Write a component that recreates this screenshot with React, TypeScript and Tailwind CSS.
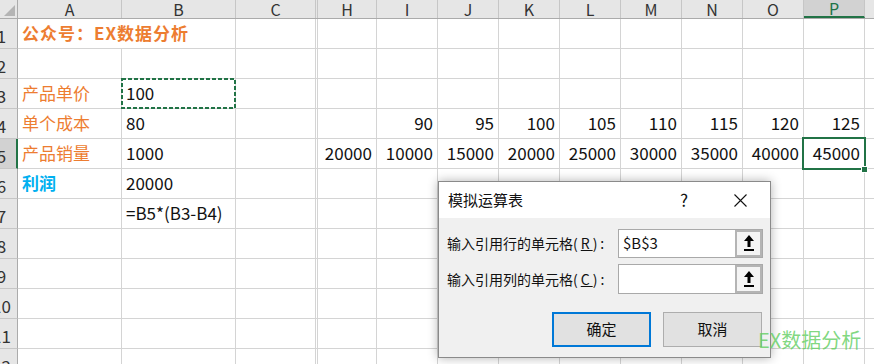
import React from 'react';

type Col = { key: string; label: string; w: string; selected?: boolean };

const cols: Col[] = [
  { key: 'A', label: 'A', w: 'w-[104px]' },
  { key: 'B', label: 'B', w: 'w-[114px]' },
  { key: 'C', label: 'C', w: 'w-[80px]' },
  { key: 'hidden', label: '', w: 'w-[2px]' },
  { key: 'H', label: 'H', w: 'w-[59px]' },
  { key: 'I', label: 'I', w: 'w-[61px]' },
  { key: 'J', label: 'J', w: 'w-[61px]' },
  { key: 'K', label: 'K', w: 'w-[61px]' },
  { key: 'L', label: 'L', w: 'w-[61px]' },
  { key: 'M', label: 'M', w: 'w-[61px]' },
  { key: 'N', label: 'N', w: 'w-[61px]' },
  { key: 'O', label: 'O', w: 'w-[61px]' },
  { key: 'P', label: 'P', w: 'w-[61px]', selected: true },
  { key: 'Q', label: 'Q', w: 'w-[61px]' },
];

type CellVal = { text: string; tone?: 'orange' | 'blueBold'; align?: 'right' };

const costs = ['90', '95', '100', '105', '110', '115', '120', '125'];
const sales = ['20000', '10000', '15000', '20000', '25000', '30000', '35000', '40000', '45000'];
const dataCols = ['I', 'J', 'K', 'L', 'M', 'N', 'O', 'P'];

const rows: Record<string, CellVal>[] = [
  {},
  {},
  { A: { text: '产品单价', tone: 'orange' }, B: { text: '100' } },
  {
    A: { text: '单个成本', tone: 'orange' },
    B: { text: '80' },
    ...Object.fromEntries(dataCols.map((c, i) => [c, { text: costs[i], align: 'right' as const }])),
  },
  {
    A: { text: '产品销量', tone: 'orange' },
    B: { text: '1000' },
    ...Object.fromEntries(['H', ...dataCols].map((c, i) => [c, { text: sales[i], align: 'right' as const }])),
  },
  { A: { text: '利润', tone: 'blueBold' }, B: { text: '20000' } },
  { B: { text: '=B5*(B3-B4)' } },
  {},
  {},
  {},
  {},
  {},
];

const toneClass = (tone?: CellVal['tone']) => {
  if (tone === 'orange') return 'text-[#ed7d31]';
  if (tone === 'blueBold') return 'text-[#00b0f0] font-bold';
  return 'text-[#111]';
};

function UpArrow() {
  return (
    <svg width="10" height="17" viewBox="0 0 10 17">
      <polygon points="5,0 10,6 6.5,6 6.5,12 3.5,12 3.5,6 0,6" fill="#000" />
      <rect x="0" y="14" width="10" height="2" fill="#000" />
    </svg>
  );
}

function RefInput({ value }: { value?: string }) {
  return (
    <div className="w-[145px] h-full flex border border-[#a9a9a9] bg-white">
      <div className="flex-1 flex items-center pl-[4px] text-[15px] text-[#111]">{value}</div>
      <div className="w-[27px] h-full bg-[#b4b4b4] p-[2px]">
        <div className="w-full h-full bg-[#f4f4f4] flex items-center justify-center">
          <UpArrow />
        </div>
      </div>
    </div>
  );
}

function DataTableDialog() {
  return (
    <div className="absolute left-[438px] top-[181px] w-[333px] h-[177px] border border-[#8a8a8a] bg-[#f0f0f0] shadow-[0_0_10px_rgba(0,0,0,0.3)] text-[15px] text-[#111]">
      {/* title bar */}
      <div className="h-[36px] bg-white flex items-center pl-[9px] pr-[8px]">
        <span className="flex-1">模拟运算表</span>
        <span className="w-[44px] mr-[12px] text-center text-[17px]">?</span>
        <span className="w-[44px] flex justify-center">
          <svg width="13" height="13" viewBox="0 0 13 13">
            <path d="M0.5 0.5 L12.5 12.5 M12.5 0.5 L0.5 12.5" stroke="#111" strokeWidth="1.1" />
          </svg>
        </span>
      </div>

      <div className="pt-[11px]">
        <div className="h-[29px] flex items-center pr-[7px]">
          <span className="flex-1 pl-[8px] whitespace-nowrap text-[14px]">
            输入引用行的单元格<span className="tracking-[3px]">(<span className="underline">R</span>):</span>
          </span>
          <RefInput value="$B$3" />
        </div>
        <div className="h-[30px] mt-[6px] flex items-center pr-[7px]">
          <span className="flex-1 pl-[8px] whitespace-nowrap text-[14px]">
            输入引用列的单元格<span className="tracking-[3px]">(<span className="underline">C</span>):</span>
          </span>
          <RefInput />
        </div>
        <div className="mt-[18px] flex justify-end gap-[12px] pr-[8px]">
          <button className="w-[99px] h-[35px] bg-[#e1e1e1] border-2 border-[#0078d7] text-[15px]">确定</button>
          <button className="w-[99px] h-[35px] bg-[#e1e1e1] border border-[#adadad] text-[15px]">取消</button>
        </div>
      </div>
    </div>
  );
}

export default function App() {
  return (
    <div className="relative w-[874px] h-[364px] overflow-hidden bg-white font-['Noto_Sans_CJK_SC',sans-serif] text-[17px]">
      {/* column headers */}
      <div className="flex h-[19px] border-b border-[#ababab] bg-[#e6e6e6]">
        <div className="relative w-[18px] shrink-0 border-r border-[#ababab]">
          <svg className="absolute right-[2px] bottom-[2px]" width="11" height="11" viewBox="0 0 11 11">
            <polygon points="11,0 11,11 0,11" fill="#b4b4b4" />
          </svg>
        </div>
        {cols.map((c) => (
          <div
            key={c.key}
            className={`${c.w} shrink-0 flex items-center justify-center leading-[18px] text-[16px] ${
              c.selected ? 'bg-[#d2d2d2] text-[#217346] border-b-2 border-[#217346] border-r border-r-[#c6c6c6]' : 'text-[#333] border-r border-[#c6c6c6]'
            }`}
          >
            {c.label}
          </div>
        ))}
      </div>

      {rows.map((row, ri) => {
        const rowNo = ri + 1;
        const selRow = rowNo === 5;
        return (
          <div key={rowNo} className="flex h-[30px]">
            <div
              className={`w-[18px] shrink-0 flex items-end overflow-hidden border-b border-[#c6c6c6] ${
                selRow ? 'bg-[#d2d2d2] border-r-2 border-r-[#217346]' : 'bg-[#e6e6e6] border-r border-r-[#ababab]'
              }`}
            >
              <div className="w-[35px] ml-[-16px] shrink-0 text-center leading-[20px] pb-[2px] text-[#333]">{rowNo}</div>
            </div>
            {rowNo === 1 ? (
              <>
                <div className="w-[218px] shrink-0 border-r border-b border-[#d4d4d4] flex items-end pb-[5px] px-[4px] leading-[20px] whitespace-nowrap font-bold tracking-[1px] text-[#ed7d31]">
                  公众号：EX数据分析
                </div>
                {cols.slice(2).map((c) => (
                  <div key={c.key} className={`${c.w} shrink-0 border-r border-b border-[#d4d4d4]`} />
                ))}
              </>
            ) : (
              cols.map((c) => {
                const v = row[c.key];
                if (c.key === 'hidden') {
                  return <div key={c.key} className={`${c.w} shrink-0 border-r border-b border-[#d4d4d4]`} />;
                }
                return (
                  <div
                    key={c.key}
                    className={`${c.w} shrink-0 border-r border-b border-[#d4d4d4] flex items-end pb-[5px] px-[4px] leading-[20px] whitespace-nowrap ${
                      v?.align === 'right' ? 'justify-end' : 'justify-start'
                    } ${toneClass(v?.tone)}`}
                  >
                    {v?.text}
                  </div>
                );
              })
            )}
          </div>
        );
      })}

      {/* copy marquee around B3 */}
      <svg className="absolute left-[121px] top-[78px]" width="115" height="31" viewBox="0 0 115 31">
        <rect x="1" y="1" width="113" height="29" fill="none" stroke="#217346" strokeWidth="2" strokeDasharray="4 2" />
      </svg>

      {/* active cell P5 */}
      <div className="absolute left-[802px] top-[137px] w-[64px] h-[33px] border-2 border-[#217346]" />
      <div className="absolute left-[861px] top-[166px] w-[7px] h-[7px] bg-[#217346] border border-white" />

      <DataTableDialog />

      <div className="absolute left-[758px] top-[327px] text-[20px] leading-[26px] text-[#5fce5f]/80 whitespace-nowrap">
        EX数据分析
      </div>
    </div>
  );
}
